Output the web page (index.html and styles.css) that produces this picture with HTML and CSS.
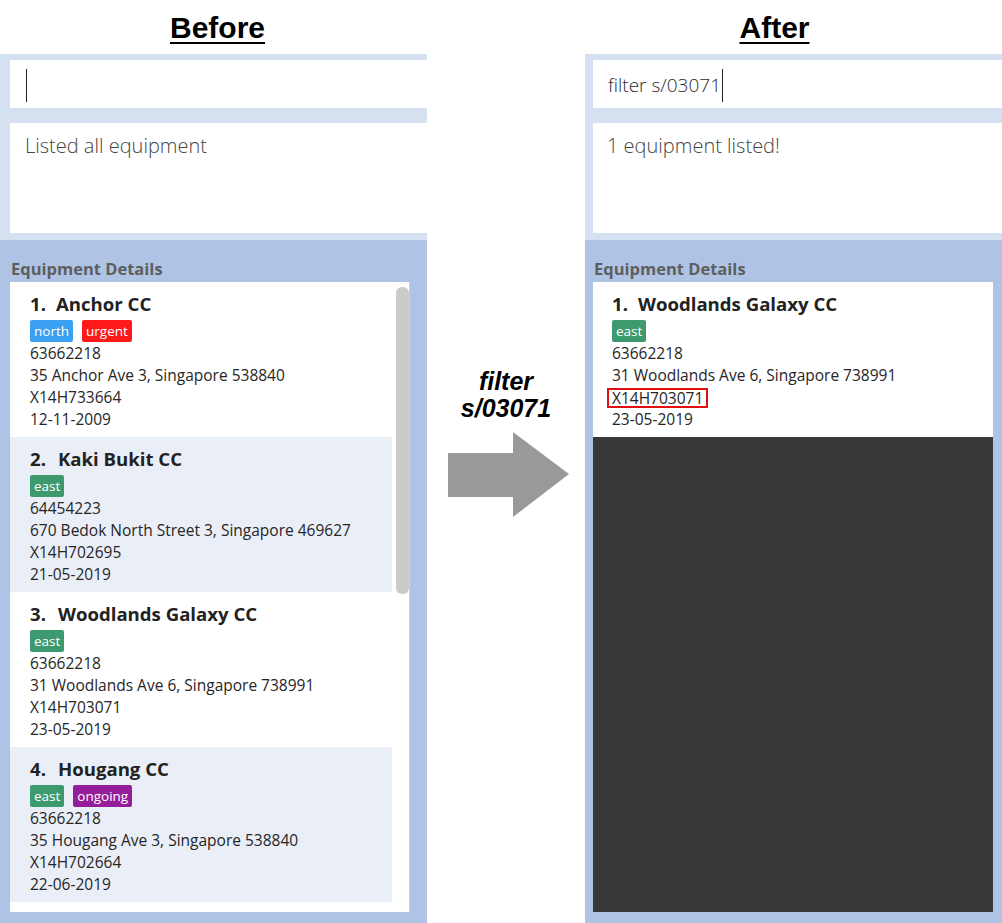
FILE: index.html
```html
<!DOCTYPE html>
<html>
<head>
<meta charset="utf-8">
<link rel="stylesheet" href="styles.css">
</head>
<body>
<div class="page">
  <section class="side side-before">
    <h1 class="title title-before">Before</h1>
    <div class="top">
      <div class="command"><span class="cursor"></span></div>
      <div class="result">Listed all equipment</div>
    </div>
    <div class="bottom">
      <div class="label">Equipment Details</div>
      <div class="list">
        <div class="cards">
          <div class="card">
            <div class="name"><span class="num num-one">1.</span>Anchor CC</div>
            <div class="tags"><span class="tag north">north</span><span class="tag urgent">urgent</span></div>
            <div class="line">63662218</div>
            <div class="line">35 Anchor Ave 3, Singapore 538840</div>
            <div class="line">X14H733664</div>
            <div class="line">12-11-2009</div>
          </div>
          <div class="card alt">
            <div class="name"><span class="num">2.</span>Kaki Bukit CC</div>
            <div class="tags"><span class="tag east">east</span></div>
            <div class="line">64454223</div>
            <div class="line">670 Bedok North Street 3, Singapore 469627</div>
            <div class="line">X14H702695</div>
            <div class="line">21-05-2019</div>
          </div>
          <div class="card">
            <div class="name"><span class="num">3.</span>Woodlands Galaxy CC</div>
            <div class="tags"><span class="tag east">east</span></div>
            <div class="line">63662218</div>
            <div class="line">31 Woodlands Ave 6, Singapore 738991</div>
            <div class="line">X14H703071</div>
            <div class="line">23-05-2019</div>
          </div>
          <div class="card alt">
            <div class="name"><span class="num">4.</span>Hougang CC</div>
            <div class="tags"><span class="tag east">east</span><span class="tag ongoing">ongoing</span></div>
            <div class="line">63662218</div>
            <div class="line">35 Hougang Ave 3, Singapore 538840</div>
            <div class="line">X14H702664</div>
            <div class="line">22-06-2019</div>
          </div>
        </div>
        <div class="track"><div class="thumb"></div></div>
      </div>
    </div>
  </section>

  <section class="middle">
    <div class="cmd-label">filter<br>s/03071</div>
    <svg class="arrow" width="122" height="86" viewBox="0 0 122 86">
      <polygon points="0,21 65,21 65,0 121,42 65,85 65,65 0,65" fill="#999999"/>
    </svg>
  </section>

  <section class="side side-after">
    <h1 class="title title-after">After</h1>
    <div class="top">
      <div class="command">filter s/03071<span class="cursor"></span></div>
      <div class="result">1 equipment listed!</div>
    </div>
    <div class="bottom">
      <div class="label">Equipment Details</div>
      <div class="list list-after">
        <div class="card">
          <div class="name"><span class="num num-one">1.</span>Woodlands Galaxy CC</div>
          <div class="tags"><span class="tag east">east</span></div>
          <div class="line">63662218</div>
          <div class="line">31 Woodlands Ave 6, Singapore 738991</div>
          <div class="line"><span class="highlight">X14H703071</span></div>
          <div class="line">23-05-2019</div>
        </div>
        <div class="empty"></div>
      </div>
    </div>
  </section>
</div>
</body>
</html>
```

FILE: styles.css
```css
* { box-sizing: border-box; }
html, body {
  margin: 0;
  padding: 0;
  background: #ffffff;
}
body {
  font-family: "Open Sans", "Noto Sans", sans-serif;
  color: #222222;
}
.page {
  display: flex;
  width: 1002px;
  height: 923px;
  overflow: hidden;
}
.side {
  display: flex;
  flex-direction: column;
}
.side-before { width: 427px; }
.side-after { width: 417px; }
.middle { width: 158px; display: flex; flex-direction: column; align-items: center; padding-top: 368px; }

.title {
  margin: 0;
  height: 54px;
  padding-top: 11px;
  font-family: "Liberation Sans", Arial, sans-serif;
  font-weight: bold;
  font-size: 30px;
  line-height: 34px;
  color: #000;
  text-decoration: underline;
  text-decoration-thickness: 2px;
  text-underline-offset: 4px;
}
.title-before { text-align: center; padding-left: 8px; }
.title-after { text-align: center; padding-right: 38px; }

.top {
  background: #d5e0f1;
  padding: 6px 0 7px 10px;
  display: flex;
  flex-direction: column;
  gap: 15px;
}
.side-after .top { padding-left: 8px; }
.command {
  background: #fff;
  height: 48px;
  padding-left: 15px;
  padding-top: 2px;
  display: flex;
  align-items: center;
  font-size: 19px;
  color: #2a2a2a;
  font-weight: 300;
}
.cursor {
  display: inline-block;
  width: 1px;
  height: 33px;
  background: #222;
  margin-left: 1px;
}
.result {
  background: #fff;
  height: 110px;
  padding: 10px 15px 9px;
  font-size: 20px;
  line-height: 26px;
  font-weight: 300;
  color: #444;
}
.side-after .result { padding-left: 14px; }

.bottom {
  flex: 1;
  background: #afc4e4;
  padding: 16px 17px 11px 10px;
  display: flex;
  flex-direction: column;
}
.side-after .bottom { padding: 16px 9px 11px 8px; }
.label {
  height: 26px;
  line-height: 26px;
  font-size: 16.5px;
  font-weight: 700;
  color: #5e5e5e;
  padding-left: 1px;
}
.list {
  flex: 1;
  background: #fff;
  display: flex;
  border-right: 1px solid #d0d0d0;
}
.list-after {
  flex-direction: column;
  border-right: none;
}
.cards { width: 382px; }
.track {
  flex: 1;
  padding: 5px 0 0 4px;
}
.thumb {
  width: 13px;
  height: 307px;
  background: #cbcbcb;
  border-radius: 6px;
}
.card {
  height: 155px;
  padding: 10px 20px 7px;
  background: #fff;
}
.card.alt { background: #eaeef7; }
.list-after .card { padding-left: 19px; }
.name {
  font-size: 18.6px;
  line-height: 24px;
  font-weight: 700;
  color: #222;
}
.num { margin-right: 12px; }
.num-one { margin-right: 10px; }
.tags {
  margin-top: 4px;
  height: 22px;
  display: flex;
  gap: 9px;
}
.tag {
  display: inline-block;
  height: 22px;
  line-height: 22px;
  padding: 0 4px;
  font-size: 13.5px;
  color: #fff;
  border-radius: 2px;
}
.north { background: #3b9ff2; }
.urgent { background: #ff1a1a; }
.east { background: #3d9a6e; }
.ongoing { background: #961d9a; }
.line {
  font-size: 15.5px;
  line-height: 22px;
  color: #262626;
  height: 22px;
}
.highlight {
  display: inline-block;
  border: 2px solid #e01010;
  line-height: 16px;
  padding: 0 3px;
  margin: 2px 0 0 -5px;
}
.empty {
  flex: 1;
  background: #383838;
}
.cmd-label {
  font-family: "Liberation Sans", Arial, sans-serif;
  font-style: italic;
  font-weight: bold;
  font-size: 25px;
  line-height: 27px;
  text-align: center;
  color: #000;
  padding-left: 0;
}
.arrow {
  display: block;
  margin-top: 10px;
  margin-left: 6px;
}
```
